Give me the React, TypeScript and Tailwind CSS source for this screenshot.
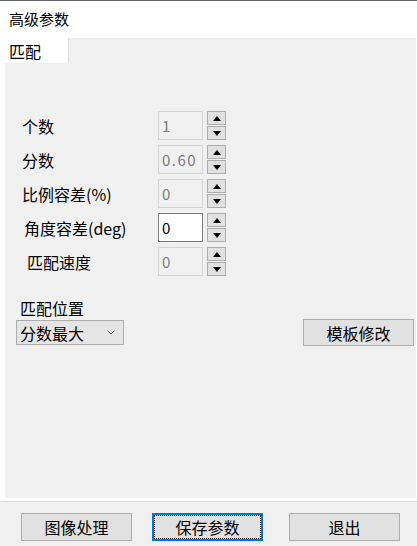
import React from "react";

const font = "font-['Noto_Sans_CJK_SC','Noto_Sans',sans-serif]";

function Spin({ value, active }: { value: string; active?: boolean }) {
  return (
    <div className="flex items-center gap-[4px]">
      <div
        className={`w-[45px] h-[29px] flex items-center pl-[3px] text-[15px] leading-none tracking-[1.5px] ${
          active
            ? "bg-white border border-[#7a7a7a] text-black"
            : "bg-[#f0f0f0] border border-[#d4d4d4] text-[#7a7a7a]"
        }`}
      >
        {value}
      </div>
      <div className="flex flex-col gap-px">
        <div className="w-[19px] h-[14px] bg-[#e1e1e1] border border-[#adadad] flex items-center justify-center">
          <svg width="8" height="5" viewBox="0 0 8 5">
            <polygon points="0,5 8,5 4,0" fill="#000" />
          </svg>
        </div>
        <div className="w-[19px] h-[14px] bg-[#e1e1e1] border border-[#adadad] flex items-center justify-center">
          <svg width="8" height="5" viewBox="0 0 8 5">
            <polygon points="0,0 8,0 4,5" fill="#000" />
          </svg>
        </div>
      </div>
    </div>
  );
}

export default function App() {
  const rows = [
    { label: "个数", value: "1", indent: "pl-0" },
    { label: "分数", value: "0.60", indent: "pl-0" },
    { label: "比例容差(%)", value: "0", indent: "pl-0" },
    { label: "角度容差(deg)", value: "0", indent: "pl-[2px]", active: true },
    { label: "匹配速度", value: "0", indent: "pl-[5px]" },
  ];

  return (
    <div className={`w-[417px] h-[546px] bg-white flex flex-col text-black ${font}`}>
      <div className="h-px bg-[#666666]" />
      <div className="h-[37px] pl-[9px] flex items-center text-[15px]">高级参数</div>

      <div className="pl-[5px] pr-[1px] flex flex-col">
        {/* tab strip */}
        <div className="h-[25px] flex bg-[#f0f0f0]">
          <div className="w-[64px] bg-white border-r border-[#d9d9d9] pl-[4px] flex items-center text-[16px]">
            匹配
          </div>
        </div>

        {/* tab panel */}
        <div className="h-[435px] bg-[#f0f0f0] pl-[17px] pt-[48px] flex flex-col">
          <div className="flex flex-col gap-[5px]">
            {rows.map((r) => (
              <div key={r.label} className="flex items-center">
                <div className={`w-[136px] text-[16px] ${r.indent}`}>{r.label}</div>
                <Spin value={r.value} active={r.active} />
              </div>
            ))}
          </div>

          <div className="mt-[22px] -ml-[2px] text-[16px] leading-[20px]">匹配位置</div>
          <div className="mt-[2px] -ml-[6px] flex items-start justify-between pr-[2px]">
            <div className="w-[108px] h-[25px] bg-[#e5e5e5] border border-[#adadad] flex items-center justify-between pl-[3px] pr-[8px] text-[16px]">
              <span>分数最大</span>
              <svg width="8" height="5" viewBox="0 0 8 5">
                <polyline points="0.5,0.5 4,4 7.5,0.5" fill="none" stroke="#555" strokeWidth="1" />
              </svg>
            </div>
            <button className="w-[111px] h-[27px] -mt-px bg-[#e1e1e1] border border-[#adadad] text-[16px] flex items-center justify-center">
              模板修改
            </button>
          </div>
        </div>
      </div>

      <div className="h-[3px] bg-white" />
      <div className="h-px bg-[#dcdcdc]" />

      {/* footer buttons */}
      <div className="flex-1 bg-[#f0f0f0] pt-[11px] pl-[21px] flex items-start">
        <button className="w-[111px] h-[28px] bg-[#e1e1e1] border border-[#adadad] text-[16px] flex items-center justify-center">
          图像处理
        </button>
        <button className="ml-[20px] w-[111px] h-[28px] bg-[#e1e1e1] border-2 border-[#0078d7] text-[16px] flex items-center justify-center">
          <span className="w-full h-full border border-dotted border-black flex items-center justify-center">
            保存参数
          </span>
        </button>
        <button className="ml-[26px] w-[111px] h-[28px] bg-[#e1e1e1] border border-[#adadad] text-[16px] flex items-center justify-center">
          退出
        </button>
      </div>
    </div>
  );
}
